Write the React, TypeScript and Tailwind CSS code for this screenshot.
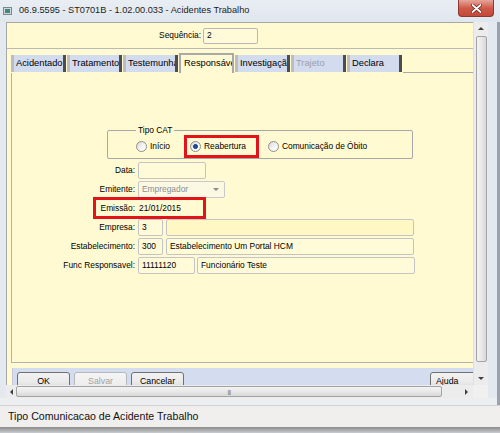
import React from "react";

function Radio({ checked }: { checked?: boolean }) {
  return (
    <span className="w-[11px] h-[11px] shrink-0 rounded-full border border-[#8e8f8f] bg-gradient-to-br from-[#d4d4d4] via-[#f4f4f4] to-[#ffffff] flex items-center justify-center">
      {checked && <span className="w-[5px] h-[5px] rounded-full bg-[#1d4f9e] border border-[#0f3a7a]" />}
    </span>
  );
}

type Tab = { label: string; active?: boolean; disabled?: boolean };
const tabs: Tab[] = [
  { label: "Acidentado" },
  { label: "Tratamento" },
  { label: "Testemunhas" },
  { label: "Responsável", active: true },
  { label: "Investigação" },
  { label: "Trajeto", disabled: true },
  { label: "Declara" },
];

function TabItem({ t }: { t: Tab }) {
  if (t.active) {
    return (
      <div className="w-[55px] h-[20px] mr-[1px] border-t-2 border-l-2 border-r-2 border-[#a9a9a9] bg-[#fffad2] flex items-center pl-[3px] overflow-hidden whitespace-nowrap text-black">
        {t.label}
      </div>
    );
  }
  return (
    <div
      className={
        "w-[55px] h-[17px] mr-[1px] mb-[1px] border-l-[3px] border-[#bdbdbd] border-r-[3px] border-r-[#4d4d4d] bg-[#d3dbef] flex items-center pl-[2px] overflow-hidden whitespace-nowrap " +
        (t.disabled ? "text-[#9aa0ad]" : "text-black")
      }
    >
      {t.label}
    </div>
  );
}

function Field({ w, children, bg }: { w: string; children?: React.ReactNode; bg?: string }) {
  return (
    <div
      className={
        "h-[17px] border border-[#c4c4c4] rounded-[2px] flex items-center pl-[3px] whitespace-nowrap overflow-hidden " +
        w +
        " " +
        (bg ?? "bg-[#fffbd8]")
      }
    >
      {children}
    </div>
  );
}

function Btn({ label, w, disabled }: { label: string; w: string; disabled?: boolean }) {
  return (
    <div
      className={
        "h-[19px] rounded-[3px] border flex items-center justify-center bg-gradient-to-b " +
        w +
        " " +
        (disabled
          ? "border-[#b5b9bc] from-[#f4f4f4] to-[#ebebeb] text-[#a3a3a3]"
          : "border-[#707070] from-[#f2f2f2] via-[#ebebeb] to-[#d6d6d6] text-black")
      }
    >
      {label}
    </div>
  );
}

export default function App() {
  return (
    <div className="w-[500px] h-[433px] overflow-hidden flex flex-col bg-[#e3e9ef] font-['Liberation_Sans',Arial,sans-serif] text-[8.4px] text-black">
      {/* Title bar */}
      <div className="h-[22px] shrink-0 flex items-start bg-gradient-to-b from-[#e9eef3] to-[#dfe6ed]">
        <div className="mt-[7px] ml-[3px] w-[9px] h-[8px] border border-[#7a8a92] bg-[#cfd8dc] flex items-center justify-center">
          <div className="w-[5px] h-[4px] bg-[#3f8a7d]" />
        </div>
        <div className="ml-[7px] mt-[4px] text-[9.2px] text-[#1c1c1c] whitespace-nowrap">
          06.9.5595 - ST0701B - 1.02.00.033 - Acidentes Trabalho
        </div>
        <div className="ml-auto mr-[6px] w-[36px] h-[17px] rounded-b-[4px] border border-t-0 border-[#8a3a33] bg-gradient-to-b from-[#e6a59b] via-[#cf5a48] to-[#c4473a] flex items-center justify-center">
          <svg width="11" height="9" viewBox="0 0 11 9">
            <path d="M1.5 1 L9.5 8 M9.5 1 L1.5 8" stroke="#5a1d16" strokeWidth="3.2" strokeLinecap="round" />
            <path d="M1.5 1 L9.5 8 M9.5 1 L1.5 8" stroke="#ffffff" strokeWidth="1.8" strokeLinecap="round" />
          </svg>
        </div>
      </div>

      {/* Middle row */}
      <div className="h-[376px] shrink-0 flex">
        <div className="w-[6px] shrink-0" />
        <div className="w-[482px] shrink-0 flex flex-col">
          <div className="h-[363px] flex">
            {/* Main column */}
            <div className="w-[467px] shrink-0 flex flex-col bg-[#fffad2] border-l border-t border-[#a8a8a8]">
              {/* Sequencia panel */}
              <div className="h-[26px] shrink-0 flex items-center border-b border-[#b9b9b9]">
                <div className="w-[195px] text-right pr-[1px]">Sequência:</div>
                <div className="ml-[1px] w-[55px] h-[16px] border border-[#b8b8b8] rounded-[2px] bg-[#fffbd8] flex items-center pl-[3px]">
                  2
                </div>
              </div>
              {/* Tabs */}
              <div className="h-[24px] shrink-0 flex items-end pl-[4px] text-[9.3px]">
                {tabs.map((t) => (
                  <TabItem key={t.label} t={t} />
                ))}
                <div className="flex-1 self-stretch border-b border-[#a9a9a9]" />
              </div>
              {/* Content */}
              <div className="flex-1 ml-[4px] border-l border-b border-[#b3b3b3] relative">
                <div className="h-[57px]" />
                {/* Group box */}
                <div className="ml-[95px] w-[306px] h-[29px] border border-[#a7a7a7] rounded-[2px] relative flex items-center pt-[4px]">
                  <span className="absolute left-[28px] top-[-6px] px-[2px] bg-[#fffad2] leading-[10px]">Tipo CAT</span>
                  <div className="ml-[28px] flex items-center gap-[3px]">
                    <Radio />
                    <span>Início</span>
                  </div>
                  <div className="ml-[20px] flex items-center gap-[3px]">
                    <Radio checked />
                    <span>Reabertura</span>
                  </div>
                  <div className="ml-[22px] flex items-center gap-[3px]">
                    <Radio />
                    <span>Comunicação de Óbito</span>
                  </div>
                </div>
                {/* Form rows */}
                <div className="mt-[2px] grid grid-cols-[123px_auto] gap-x-[3px] auto-rows-[19px] items-center">
                  <div className="text-right">Data:</div>
                  <Field w="w-[68px]" />

                  <div className="text-right">Emitente:</div>
                  <div className="w-[87px] h-[17px] border border-[#c8c8c8] rounded-[2px] bg-[#fbf8e4] flex items-center pl-[3px] text-[#8d8d8d] relative">
                    Empregador
                    <span className="absolute right-[5px] top-[6px] w-0 h-0 border-l-[3px] border-r-[3px] border-t-[3px] border-l-transparent border-r-transparent border-t-[#8a8a8a]" />
                  </div>

                  <div className="text-right">Emissão:</div>
                  <div className="pl-[1px]">21/01/2015</div>

                  <div className="text-right">Empresa:</div>
                  <div className="flex gap-[3px]">
                    <Field w="w-[25px]">3</Field>
                    <Field w="w-[248px]" bg="bg-[#fff8c4]" />
                  </div>

                  <div className="text-right">Estabelecimento:</div>
                  <div className="flex gap-[3px]">
                    <Field w="w-[25px]">300</Field>
                    <Field w="w-[248px]">Estabelecimento Um Portal HCM</Field>
                  </div>

                  <div className="text-right">Func Responsavel:</div>
                  <div className="flex gap-[2px]">
                    <Field w="w-[57px]">11111120</Field>
                    <Field w="w-[218px]">Funcionário Teste</Field>
                  </div>
                </div>

                {/* Highlight rectangles */}
                <div className="absolute left-[172px] top-[62px] w-[75px] h-[23px] border-[3px] border-[#e3131b]" />
                <div className="absolute left-[81px] top-[124px] w-[113px] h-[22px] border-[3px] border-[#e3131b]" />
              </div>
              <div className="h-[5px] shrink-0" />
              {/* Button bar */}
              <div className="h-[17px] shrink-0 ml-[5px] bg-[#d4dcf0] border-l border-[#c3c9d6] overflow-hidden flex items-start pt-[4px] text-[8.8px]">
                <div className="ml-[4px] flex gap-[4px]">
                  <Btn label="OK" w="w-[53px]" />
                  <Btn label="Salvar" w="w-[53px]" disabled />
                  <Btn label="Cancelar" w="w-[53px]" />
                </div>
                <div className="ml-auto w-[43px] overflow-hidden">
                  <div className="w-[52px] h-[19px] rounded-[3px] border border-[#707070] bg-gradient-to-b from-[#f2f2f2] via-[#ebebeb] to-[#d6d6d6] flex items-center pl-[5px]">
                    Ajuda
                  </div>
                </div>
              </div>
            </div>
            {/* Vertical scrollbar */}
            <div className="w-[15px] shrink-0 bg-[#ececec] flex flex-col items-center border-l border-[#e0e0e0]">
              <div className="h-[13px] flex items-center justify-center">
                <span className="w-0 h-0 border-l-[3px] border-r-[3px] border-b-[3px] border-l-transparent border-r-transparent border-b-[#404040]" />
              </div>
              <div className="mt-[1px] w-[11px] h-[326px] rounded-[2px] border border-[#a3a3a3] bg-gradient-to-r from-[#f3f3f3] via-[#e9e9e9] to-[#d8d8d8]" />
              <div className="flex-1" />
              <div className="h-[14px] flex items-center justify-center">
                <span className="w-0 h-0 border-l-[3px] border-r-[3px] border-t-[3px] border-l-transparent border-r-transparent border-t-[#404040]" />
              </div>
            </div>
          </div>
          {/* Horizontal scrollbar */}
          <div className="h-[13px] shrink-0 flex">
            <div className="w-[467px] flex items-center bg-[#ececec]">
              <div className="w-[10px] flex items-center justify-center">
                <span className="w-0 h-0 border-t-[3px] border-b-[3px] border-r-[3px] border-t-transparent border-b-transparent border-r-[#404040]" />
              </div>
              <div className="w-[426px] h-[11px] rounded-[2px] border border-[#a3a3a3] bg-gradient-to-b from-[#f3f3f3] via-[#e9e9e9] to-[#d8d8d8] flex items-center justify-center">
                <span className="text-[6px] text-[#666] tracking-[-0.5px] leading-none">|||</span>
              </div>
              <div className="flex-1 flex items-center justify-end pr-[5px]">
                <span className="w-0 h-0 border-t-[3px] border-b-[3px] border-l-[3px] border-t-transparent border-b-transparent border-l-[#404040]" />
              </div>
            </div>
            <div className="flex-1 bg-[#f0f0f0]" />
          </div>
        </div>
        <div className="flex-1 border-r-[3px] border-[#9aa3ab]" />
      </div>

      {/* Gap */}
      <div className="h-[7px] shrink-0 bg-[#eceeef] border-r-[3px] border-[#9aa3ab]" />
      {/* Status bar */}
      <div className="h-[22px] shrink-0 border-t border-[#d2d2d2] bg-[#f1eeee] flex items-center pl-[8px] text-[10.6px] text-[#111]">
        Tipo Comunicacao de Acidente Trabalho
      </div>
      <div className="h-[6px] shrink-0 bg-gradient-to-b from-[#8c8c8c] to-[#c9cdd1]" />
    </div>
  );
}
